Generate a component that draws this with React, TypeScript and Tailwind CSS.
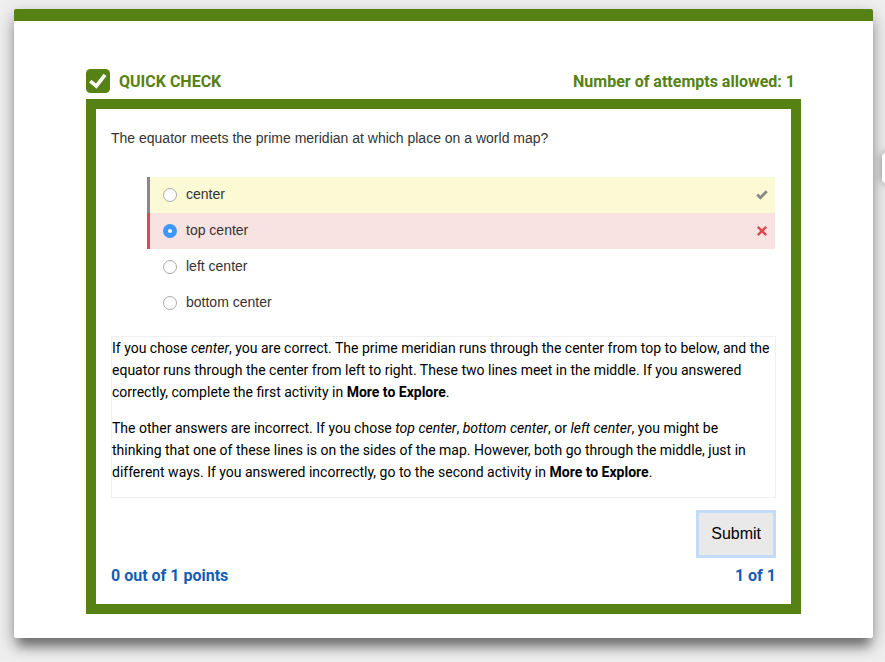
import { useState } from 'react';

type Mark = 'correct' | 'wrong' | 'none';

const options: { label: string; mark: Mark }[] = [
  { label: 'center', mark: 'correct' },
  { label: 'top center', mark: 'wrong' },
  { label: 'left center', mark: 'none' },
  { label: 'bottom center', mark: 'none' },
];

const rowStyles: Record<Mark, string> = {
  correct: 'border-[#888888] bg-[#fcf9d5]',
  wrong: 'border-[#e0484f] bg-[#f9e3e2]',
  none: 'border-transparent',
};

function BadgeIcon() {
  return (
    <svg viewBox="0 0 24 24" className="size-6" aria-hidden="true">
      <rect width="24" height="24" rx="4.5" fill="#568214" />
      <path d="M4.2 12 L10.3 17.2 L19 5.8" fill="none" stroke="#fff" strokeWidth="3.6" />
    </svg>
  );
}

function MarkIcon({ mark }: { mark: Mark }) {
  if (mark === 'correct') {
    return (
      <svg viewBox="0 0 12 12" className="size-3" role="img" aria-label="Correct answer">
        <path d="M1.2 5.6 L4.4 8.7 L10.8 2.3" fill="none" stroke="#888" strokeWidth="2.8" />
      </svg>
    );
  }
  if (mark === 'wrong') {
    return (
      <svg viewBox="0 0 12 12" className="size-3" role="img" aria-label="Incorrect answer">
        <path d="M1.8 1.8 L10.2 10.2 M10.2 1.8 L1.8 10.2" fill="none" stroke="#e0484f" strokeWidth="2.4" />
      </svg>
    );
  }
  return null;
}

export default function App() {
  const [selected, setSelected] = useState(1);

  return (
    <div className="relative min-h-screen overflow-hidden bg-[#efefef] pt-[9px] pr-3 pb-6 pl-3.5 font-['Roboto','Liberation_Sans',sans-serif] text-sm text-black">
      <main className="rounded-[2px] border-t-12 border-[#568214] bg-white px-18 pt-12 pb-6 shadow-[0_12px_10px_-4px_rgba(0,0,0,0.35),0_7px_18px_rgba(0,0,0,0.35)]">
        <header className="flex items-center justify-between pr-1.5 pb-1.5 text-base leading-[22px] font-bold text-[#568214]">
          <h1 className="flex items-center gap-[9px]">
            <BadgeIcon />
            <span className="pt-0.5">QUICK CHECK</span>
          </h1>
          <p className="pt-0.5">Number of attempts allowed: 1</p>
        </header>

        <form
          className="border-10 border-[#568214] px-[15px] pt-[19px] pb-4"
          onSubmit={(event) => event.preventDefault()}
        >
          <fieldset className="font-['Liberation_Sans',Arial,sans-serif] text-[#333]">
            <legend className="leading-5">
              The equator meets the prime meridian at which place on a world map?
            </legend>
            <div className="mt-[29px] mr-px pl-9">
              {options.map((option, index) => (
                <label
                  key={option.label}
                  className={`flex h-9 items-center gap-[9px] border-l-3 pr-[7px] pl-[13px] ${rowStyles[option.mark]}`}
                >
                  <input
                    type="radio"
                    name="answer"
                    checked={selected === index}
                    onChange={() => setSelected(index)}
                    className="size-3.5 appearance-none rounded-full border border-[#aaa] bg-white checked:border-5 checked:border-[#3f96fb]"
                  />
                  <span className="grow pb-0.5 leading-5">{option.label}</span>
                  <MarkIcon mark={option.mark} />
                </label>
              ))}
            </div>
          </fieldset>

          <div className="mt-[15px] border border-[#f0f0f0] pr-[5px] pb-3.5 leading-[22px]">
            <p>
              If you chose <em>center</em>, you are correct. The prime meridian runs through the
              center from top to below, and the equator runs through the center from left to right.
              These two lines meet in the middle. If you answered correctly, complete the first
              activity in <strong>More to Explore</strong>.
            </p>
            <p className="mt-3.5">
              The other answers are incorrect. If you chose <em>top center</em>,{' '}
              <em>bottom center</em>, or <em>left center</em>, you might be thinking that one of
              these lines is on the sides of the map. However, both go through the middle, just in
              different ways. If you answered incorrectly, go to the second activity in{' '}
              <strong>More to Explore</strong>.
            </p>
          </div>

          <div className="mt-3 flex justify-end">
            <button
              type="submit"
              className="border-3 border-[#c2dcf8] bg-[#e9e9e9] px-3 py-[9px] font-['Liberation_Sans',Arial,sans-serif] text-base leading-6"
            >
              Submit
            </button>
          </div>

          <div className="mt-1.5 flex justify-between text-base leading-6 font-bold text-[#145db3]">
            <p>0 out of 1 points</p>
            <p>1 of 1</p>
          </div>
        </form>
      </main>
      <div className="absolute top-[153px] -right-3 h-[30px] w-[15px] rounded-[4px] bg-white shadow-[0_0_10px_rgba(0,0,0,0.4)]" />
    </div>
  );
}
